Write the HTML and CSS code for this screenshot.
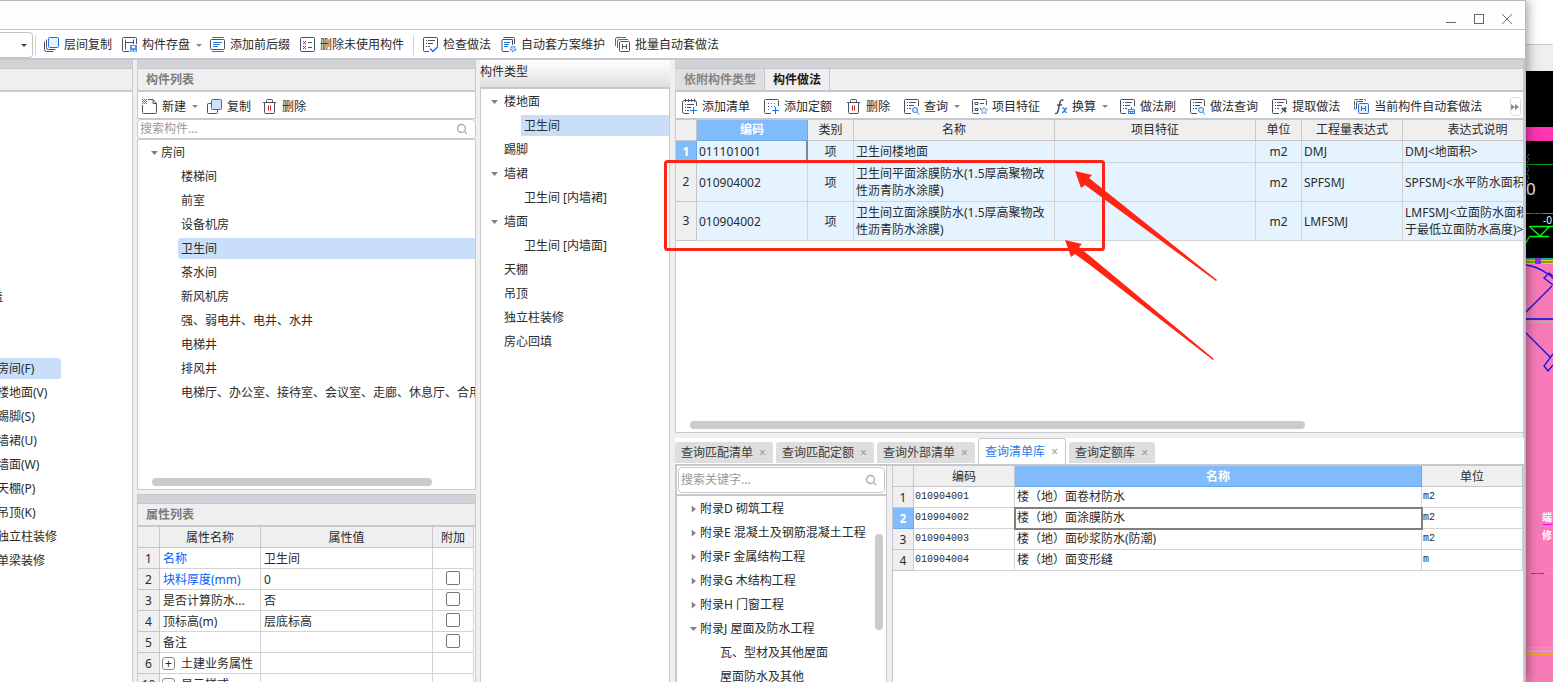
FILE: index.html
```html
<!DOCTYPE html>
<html lang="zh-CN">
<head>
<meta charset="utf-8">
<title>构件做法</title>
<link rel="stylesheet" href="styles.css">
</head>
<body>
<svg class="sprite" aria-hidden="true">
  <symbol id="i-layers" viewBox="0 0 16 16"><g fill="none" stroke="#4a4f63"><path d="M.5 4.500v8a2 2 0 0 0 2 2h7M2.500 2.500v8a2 2 0 0 0 2 2h7"/></g><rect x="4.500" y=".5" width="10" height="10" rx="1" fill="#e6f1fe" stroke="#1f74e0"/></symbol>
  <symbol id="i-save" viewBox="0 0 16 16"><path d="M14.500 7V1.500a1 1 0 0 0-1-1h-12a1 1 0 0 0-1 1v12a1 1 0 0 0 1 1H7M3.500 2.500v10M3.500 5.500h8M11.500 2.500V7" fill="none" stroke="#4a4f63"/><path d="M8 8h7v7H8z" fill="#5b95e8"/><path d="M10 9h3v2h-3zM9.500 13h1v2h-1zM12.500 13h1v2h-1z" fill="#fff"/></symbol>
  <symbol id="i-affix" viewBox="0 0 16 16"><path d="M2 .5h12M2 14.500h12M3 5.500h9M3 7.500h7M3 9.500h5" fill="none" stroke="#1f74e0"/><rect x=".5" y="2.500" width="14" height="10" rx="1" fill="none" stroke="#4a4f63"/></symbol>
  <symbol id="i-unused" viewBox="0 0 16 16"><rect x=".5" y=".5" width="14" height="14" rx="1" fill="none" stroke="#4a4f63"/><path d="M3 4l3 3M6 4L3 7M3 9l3 3M6 9l-3 3" stroke="#d8202a"/><path d="M8 5.500h4M8 10.500h4" stroke="#4a4f63"/></symbol>
  <symbol id="i-check" viewBox="0 0 16 16"><path d="M14.500 9V1.500a1 1 0 0 0-1-1h-12a1 1 0 0 0-1 1v12a1 1 0 0 0 1 1H6M3 3.500h1M5 3.500h7M3 6.500h1M5 6.500h5M3 9.500h1M5 9.500h2" fill="none" stroke="#4a4f63"/><path d="M7 11.500l3 3 5-5" fill="none" stroke="#1f74e0" stroke-width="1.500"/></symbol>
  <symbol id="i-plan" viewBox="0 0 16 16"><path d="M2.500.5h10a1 1 0 0 1 1 1V7M8 14.500H2a1 1 0 0 1-1-1v-10a1 1 0 0 1 1-1h9.500V8" fill="none" stroke="#4a4f63"/><path d="M3 5.500h6M3 7.500h5M3 9.500h4" stroke="#1f74e0"/><circle cx="12" cy="12" r="2.500" fill="#bcd6fa" stroke="#5b95e8" stroke-width="1.500" stroke-dasharray="2 1"/></symbol>
  <symbol id="i-batch" viewBox="0 0 16 16"><path d="M.5 9V2a1.500 1.500 0 0 1 1.500-1.500h9M2.500 11V4A1.500 1.500 0 0 1 4 2.500h9" fill="none" stroke="#1f74e0"/><rect x="4.500" y="4.500" width="10" height="10" rx="1" fill="#fff" stroke="#4a4f63"/><path d="M7.500 7v5M11.500 7v5M7.500 9.500h4" stroke="#4a4f63"/></symbol>
  <symbol id="i-new" viewBox="0 0 16 16"><path d="M6 .5h5l3.500 4v9a1 1 0 0 1-1 1h-12a1 1 0 0 1-1-1V6M11 .5V4.500h3.500" fill="none" stroke="#4a4f63"/><path d="M0 .5h5M0 2.500h5M0 4.500h5" stroke="#2b7de9" stroke-dasharray="1 1"/><path d="M1 1.500h4M1 3.500h4" stroke="#2b7de9" stroke-dasharray="1 1"/></symbol>
  <symbol id="i-copy" viewBox="0 0 16 16"><path d="M4 4.500H1.500a1 1 0 0 0-1 1v8a1 1 0 0 0 1 1h8a1 1 0 0 0 1-1V11" fill="none" stroke="#4a4f63"/><rect x="4.500" y=".5" width="10" height="10" rx="1" fill="#cfe2fb" stroke="#1f74e0"/></symbol>
  <symbol id="i-trash" viewBox="0 0 16 16"><path d="M1 3.500h13M4.500 3V1.500a1 1 0 0 1 1-1h4a1 1 0 0 1 1 1V3M2.500 4v9.500a1 1 0 0 0 1 1h8a1 1 0 0 0 1-1V4" fill="none" stroke="#4a4f63"/><path d="M6.500 6.500v5M8.500 6.500v5" stroke="#d8202a"/></symbol>
  <symbol id="i-addlist" viewBox="0 0 16 16"><path d="M14.500 7V3.500a2 2 0 0 0-2-2h-10a2 2 0 0 0-2 2v9a2 2 0 0 0 2 2H7M3.500 0v3M6.500 0v3M9.500 0v3M12.500 0v3M3 5.500h1M5 5.500h7M3 8.500h1M5 8.500h4M3 11.500h1M5 11.500h2" fill="none" stroke="#4a4f63"/><path d="M11.500 8v7M8 11.500h7" stroke="#1f74e0"/></symbol>
  <symbol id="i-addquota" viewBox="0 0 16 16"><path d="M14.500 7V1.500a1 1 0 0 0-1-1h-12a1 1 0 0 0-1 1v12a1 1 0 0 0 1 1H7" fill="none" stroke="#4a4f63"/><path d="M4 4.500h8M4 7.500h8M4 10.500h3" stroke="#1f74e0" stroke-dasharray="1 2"/><path d="M11.500 8v7M8 11.500h7" stroke="#1f74e0"/></symbol>
  <symbol id="i-query" viewBox="0 0 16 16"><path d="M14.500 7V1.500a1 1 0 0 0-1-1h-12a1 1 0 0 0-1 1v12a1 1 0 0 0 1 1H7M3 3.500h1M5 3.500h7M3 6.500h1M5 6.500h5M3 9.500h1M5 9.500h2" fill="none" stroke="#4a4f63"/><circle cx="11" cy="11" r="2.500" fill="#e3effd" stroke="#2b7de9"/><path d="M13 13l2 2.500" stroke="#2b7de9"/></symbol>
  <symbol id="i-feature" viewBox="0 0 16 16"><path d="M14.500 6V1.500a1 1 0 0 0-1-1h-12a1 1 0 0 0-1 1v12a1 1 0 0 0 1 1H7M3 3.500h3v2H3zM3 9.500h3v2H3zM8 4.500h4M8 9.500h1" fill="none" stroke="#4a4f63"/><path d="M12 8l1 2.200 2.500.3-1.800 1.600.5 2.600-2.200-1.300-2.200 1.300.5-2.600-1.800-1.600 2.500-.3z" fill="#e3effd" stroke="#5b95e8" stroke-width=".8"/></symbol>
  <symbol id="i-fx" viewBox="0 0 14 16"><path d="M1 14.500c2 .5 2.800-1 3.300-3.500L6 3.500C6.500 1.300 7.500.6 9.500 1.200M3 6h5" fill="none" stroke="#4a4f63" stroke-width="1.500"/><path d="M8 9c1.500-.5 2 0 2.500 2s1 2.800 2.500 2M13 9c-1.500 0-3 4.500-5 4.500" fill="none" stroke="#2b7de9" stroke-width="1.300"/></symbol>
  <symbol id="i-brush" viewBox="0 0 16 16"><path d="M14.500 7V1.500a1 1 0 0 0-1-1h-12a1 1 0 0 0-1 1v12a1 1 0 0 0 1 1H6M3 3.500h1M5 3.500h7M3 6.500h1M5 6.500h5M3 9.500h1M5 9.500h2" fill="none" stroke="#4a4f63"/><path d="M11.500 8v2.500M8.500 15v-4.500h6V15M8 12.500h7M10.500 13v2M12.500 13v2M8 14.500h7" fill="none" stroke="#2b7de9"/></symbol>
  <symbol id="i-extract" viewBox="0 0 16 16"><path d="M14.500 5V1.500a1 1 0 0 0-1-1h-12a1 1 0 0 0-1 1v12a1 1 0 0 0 1 1H7M3 3.500h1M5 3.500h7M3 6.500h1M5 6.500h5M3 9.500h1M5 9.500h2M8.500 14.500l4-4" fill="none" stroke="#4a4f63"/><path d="M10 9l4 4M11.500 11.500l2.500-3" stroke="#4a4f63" stroke-width="2.200"/></symbol>
  <symbol id="i-auto" viewBox="0 0 16 16"><path d="M2 10.500H1.500a1 1 0 0 1-1-1v-8a1 1 0 0 1 1-1h9a1 1 0 0 1 1 1V2" fill="none" stroke="#4a4f63" stroke-dasharray="4 1"/><path d="M2.500 10V3.500a1 1 0 0 1 1-1H9" fill="none" stroke="#4a4f63"/><rect x="4.500" y="4.500" width="10" height="10" rx="1" fill="#e3effd" stroke="#1f74e0"/><path d="M7.500 7v5M11.500 7v5M7.500 9.500h4" stroke="#1f74e0"/></symbol>
  <symbol id="i-search" viewBox="0 0 12 12"><circle cx="5.500" cy="5.500" r="4" fill="none" stroke="#aaa" stroke-width="1.300"/><path d="M8.500 8.500l2.500 2.500" stroke="#aaa" stroke-width="1.300"/></symbol>
</svg>

<main class="dialog">
  <header class="titlebar">
    <button class="win-btn" aria-label="最小化"><svg width="11" height="11"><path d="M0 8.500h10" stroke="#666"/></svg></button>
    <button class="win-btn" aria-label="最大化"><svg width="11" height="11"><rect x=".5" y=".5" width="9" height="9" fill="none" stroke="#666"/></svg></button>
    <button class="win-btn" aria-label="关闭"><svg width="11" height="11"><path d="M0 0l10 10M10 0L0 10" stroke="#777"/></svg></button>
  </header>

  <nav class="toolbar toolbar--main">
    <button class="combo" aria-label="选择楼层"><i class="caret"></i></button>
    <span class="sep"></span>
    <button class="tool"><svg class="icon"><use href="#i-layers"/></svg>层间复制</button>
    <button class="tool"><svg class="icon"><use href="#i-save"/></svg>构件存盘<i class="caret"></i></button>
    <button class="tool"><svg class="icon"><use href="#i-affix"/></svg>添加前后缀</button>
    <button class="tool"><svg class="icon"><use href="#i-unused"/></svg>删除未使用构件</button>
    <span class="sep"></span>
    <button class="tool"><svg class="icon"><use href="#i-check"/></svg>检查做法</button>
    <button class="tool"><svg class="icon"><use href="#i-plan"/></svg>自动套方案维护</button>
    <button class="tool"><svg class="icon"><use href="#i-batch"/></svg>批量自动套做法</button>
  </nav>

  <div class="workspace">
    <section class="col nav-col">
      <div class="strip"></div>
      <div class="panel-title"></div>
      <ul class="tree nav-tree">
        <li class="cut">盖</li>
        <li class="after-gap selected"><span>房间(F)</span></li>
        <li>楼地面(V)</li>
        <li>踢脚(S)</li>
        <li>墙裙(U)</li>
        <li>墙面(W)</li>
        <li>天棚(P)</li>
        <li>吊顶(K)</li>
        <li>独立柱装修</li>
        <li>单梁装修</li>
      </ul>
    </section>

    <section class="col list-col">
      <div class="strip"></div>
      <h2 class="panel-title">构件列表</h2>
      <div class="toolbar toolbar--list">
        <button class="tool"><svg class="icon"><use href="#i-new"/></svg>新建<i class="caret"></i></button>
        <button class="tool"><svg class="icon"><use href="#i-copy"/></svg>复制</button>
        <button class="tool"><svg class="icon"><use href="#i-trash"/></svg>删除</button>
      </div>
      <label class="search"><input type="text" placeholder="搜索构件..." aria-label="搜索构件"><svg class="search-icon"><use href="#i-search"/></svg></label>
      <div class="list-box">
        <ul class="tree room-tree">
          <li class="root"><i class="arrow arrow--down"></i>房间</li>
          <li>楼梯间</li>
          <li>前室</li>
          <li>设备机房</li>
          <li class="selected"><span>卫生间</span></li>
          <li>茶水间</li>
          <li>新风机房</li>
          <li>强、弱电井、电井、水井</li>
          <li>电梯井</li>
          <li>排风井</li>
          <li>电梯厅、办公室、接待室、会议室、走廊、休息厅、合用前室</li>
        </ul>
        <div class="hscroll"></div>
      </div>
      <div class="props">
        <div class="strip"></div>
        <h2 class="panel-title">属性列表</h2>
        <div class="props-body">
        <table class="grid props-grid">
          <colgroup><col class="w-num"><col class="w-100"><col><col class="w-add"></colgroup>
          <thead><tr><th></th><th>属性名称</th><th>属性值</th><th>附加</th></tr></thead>
          <tbody>
            <tr><th>1</th><td class="link">名称</td><td>卫生间</td><td></td></tr>
            <tr><th>2</th><td class="link">块料厚度(mm)</td><td>0</td><td class="mid"><input type="checkbox" aria-label="附加块料厚度"></td></tr>
            <tr><th>3</th><td>是否计算防水...</td><td>否</td><td class="mid"><input type="checkbox" aria-label="附加是否计算防水"></td></tr>
            <tr><th>4</th><td>顶标高(m)</td><td>层底标高</td><td class="mid"><input type="checkbox" aria-label="附加顶标高"></td></tr>
            <tr><th>5</th><td>备注</td><td></td><td class="mid"><input type="checkbox" aria-label="附加备注"></td></tr>
            <tr><th>6</th><td><button class="expand" aria-label="展开">+</button>土建业务属性</td><td></td><td></td></tr>
            <tr><th>10</th><td><button class="expand" aria-label="展开">+</button>显示样式</td><td></td><td></td></tr>
          </tbody>
        </table>
        </div>
      </div>
    </section>

    <section class="col type-col">
      <h2 class="type-title">构件类型</h2>
      <ul class="tree type-tree">
        <li><i class="arrow arrow--down"></i>楼地面</li>
        <li class="child selected"><span>卫生间</span></li>
        <li>踢脚</li>
        <li><i class="arrow arrow--down"></i>墙裙</li>
        <li class="child">卫生间 [内墙裙]</li>
        <li><i class="arrow arrow--down"></i>墙面</li>
        <li class="child">卫生间 [内墙面]</li>
        <li>天棚</li>
        <li>吊顶</li>
        <li>独立柱装修</li>
        <li>房心回填</li>
      </ul>
    </section>

    <section class="col work-col">
      <div class="strip"></div>
      <div class="tabs" role="tablist">
        <button class="tab" role="tab">依附构件类型</button>
        <button class="tab tab--on" role="tab">构件做法</button>
      </div>
      <div class="toolbar toolbar--work">
        <button class="tool"><svg class="icon"><use href="#i-addlist"/></svg>添加清单</button>
        <button class="tool"><svg class="icon"><use href="#i-addquota"/></svg>添加定额</button>
        <button class="tool"><svg class="icon"><use href="#i-trash"/></svg>删除</button>
        <button class="tool"><svg class="icon"><use href="#i-query"/></svg>查询<i class="caret"></i></button>
        <button class="tool"><svg class="icon"><use href="#i-feature"/></svg>项目特征</button>
        <button class="tool"><svg class="icon icon--fx"><use href="#i-fx"/></svg>换算<i class="caret"></i></button>
        <button class="tool"><svg class="icon"><use href="#i-brush"/></svg>做法刷</button>
        <button class="tool"><svg class="icon"><use href="#i-query"/></svg>做法查询</button>
        <button class="tool"><svg class="icon"><use href="#i-extract"/></svg>提取做法</button>
        <button class="tool"><svg class="icon"><use href="#i-auto"/></svg>当前构件自动套做法</button>
        <button class="more" aria-label="更多"><svg width="9" height="6"><path d="M0 0l4 3-4 3zM4 0l4 3-4 3z" fill="#888"/></svg></button>
      </div>
      <div class="work-box">
        <table class="grid work-grid">
          <colgroup><col class="w-num2"><col class="w-code"><col class="w-kind"><col class="w-name"><col class="w-name"><col class="w-kind"><col class="w-expr"><col class="w-desc"></colgroup>
          <thead><tr><th></th><th class="hot">编码</th><th>类别</th><th>名称</th><th>项目特征</th><th>单位</th><th>工程量表达式</th><th>表达式说明</th></tr></thead>
          <tbody>
            <tr><th class="hot">1</th><td class="cursor">011101001</td><td class="mid">项</td><td>卫生间楼地面</td><td></td><td class="mid">m2</td><td>DMJ</td><td>DMJ&lt;地面积&gt;</td></tr>
            <tr class="tall"><th>2</th><td>010904002</td><td class="mid">项</td><td>卫生间平面涂膜防水(1.5厚高聚物改性沥青防水涂膜)</td><td></td><td class="mid">m2</td><td>SPFSMJ</td><td>SPFSMJ&lt;水平防水面积&gt;</td></tr>
            <tr class="tall"><th>3</th><td>010904002</td><td class="mid">项</td><td>卫生间立面涂膜防水(1.5厚高聚物改性沥青防水涂膜)</td><td></td><td class="mid">m2</td><td>LMFSMJ</td><td>LMFSMJ&lt;立面防水面积(大<br>于最低立面防水高度)&gt;</td></tr>
          </tbody>
        </table>
        <div class="hscroll"></div>
      </div>

      <div class="qtabs" role="tablist">
        <button class="qtab" role="tab">查询匹配清单<span>×</span></button>
        <button class="qtab" role="tab">查询匹配定额<span>×</span></button>
        <button class="qtab" role="tab">查询外部清单<span>×</span></button>
        <button class="qtab qtab--on" role="tab">查询清单库<span>×</span></button>
        <button class="qtab" role="tab">查询定额库<span>×</span></button>
      </div>
      <div class="query">
        <div class="query-side">
          <label class="search search--key"><input type="text" placeholder="搜索关键字..." aria-label="搜索关键字"><svg class="search-icon"><use href="#i-search"/></svg></label>
          <div class="chapter-box">
            <ul class="tree chapter-tree">
              <li><i class="arrow"></i>附录D 砌筑工程</li>
              <li><i class="arrow"></i>附录E 混凝土及钢筋混凝土工程</li>
              <li><i class="arrow"></i>附录F 金属结构工程</li>
              <li><i class="arrow"></i>附录G 木结构工程</li>
              <li><i class="arrow"></i>附录H 门窗工程</li>
              <li><i class="arrow arrow--down"></i>附录J 屋面及防水工程</li>
              <li class="child">瓦、型材及其他屋面</li>
              <li class="child">屋面防水及其他</li>
            </ul>
            <div class="vscroll"></div>
          </div>
        </div>
        <div class="query-main">
          <table class="grid query-grid">
            <colgroup><col class="w-num2"><col class="w-100"><col><col class="w-100"></colgroup>
            <thead><tr><th></th><th>编码</th><th class="hot">名称</th><th>单位</th></tr></thead>
            <tbody>
              <tr><th>1</th><td class="mono">010904001</td><td>楼（地）面卷材防水</td><td class="mono">m2</td></tr>
              <tr><th class="hot">2</th><td class="mono">010904002</td><td class="focus">楼（地）面涂膜防水</td><td class="mono">m2</td></tr>
              <tr><th>3</th><td class="mono">010904003</td><td>楼（地）面砂浆防水(防潮)</td><td class="mono">m2</td></tr>
              <tr><th>4</th><td class="mono">010904004</td><td>楼（地）面变形缝</td><td class="mono">m</td></tr>
            </tbody>
          </table>
        </div>
      </div>

      <svg class="marks" width="560" height="210" aria-hidden="true">
        <rect x="1.500" y="1.500" width="438" height="88" rx="2" fill="none" stroke="#ff2414" stroke-width="3"/>
        <g fill="#ff2414">
          <path d="M411 11L428 15L425 18L553 120L552 121L436 36L421 25L417 28Z"/>
          <path d="M401 80L418 84L415 87L550 199L549 200L426 105L411 94L407 97Z"/>
        </g>
      </svg>
    </section>
  </div>
</main>

<aside class="drawing">
  <svg width="27" height="682">
    <rect width="27" height="682" fill="#f87bb8"/>
    <rect width="27" height="44" fill="#fff"/>
    <rect y="44" width="27" height="27" fill="#efefef"/>
    <path d="M0 44.500h27" stroke="#ccc"/>
    <rect y="71" width="27" height="187" fill="#000"/>
    <rect y="127" width="27" height="14" fill="#ff35b1"/>
    <path d="M0 164.500h27" stroke="#009a10"/>
    <path d="M3 154l-2 3 2 2-2 4M1 166l2 3-2 4 2 4-2 5 1 14" fill="none" stroke="#4d7ca8" stroke-dasharray="3 1"/>
    <path d="M0 213.500h27" stroke="#777"/>
    <path d="M5 213.500h5M12 213.500h5" stroke="#007a10"/>
    <text x="0" y="195" class="dim-big">0</text>
    <text x="17" y="224" class="dim-small">-0</text>
    <path d="M3 226.500h24M3 236.500h20M4 227l10 9 9-9M3 237l-3 6" fill="none" stroke="#00ff10" stroke-width="1.300"/>
    <rect y="258" width="27" height="2" fill="#1fa5a5"/>
    <rect y="260" width="27" height="4" fill="#d8d820"/>
    <path d="M0 262h27" stroke="#4b4b10"/>
    <rect x="9" y="258" width="6" height="6" fill="#8a2be2"/>
    <path d="M0 265c9 1 16 5 22 9s4 4 5 4M0 312l26-26M27 285l-9-7 5-5 4 3M0 333l25 25M27 354l-9 12 4 5 5-6" fill="none" stroke="#1010f0" stroke-width="1.300"/>
    <path d="M0 319h27" stroke="#3c24d0" stroke-width="2"/>
    <path d="M0 322.500h27" stroke="#b9b0b0"/>
    <text x="16" y="521" class="tag">端</text>
    <path d="M17 524.500h10" stroke="#f0f"/>
    <text x="16" y="539" class="tag">修</text>
    <path d="M0 573.500h27" stroke="#d99aae"/>
    <path d="M5 573.500h6M12 573.500h6" stroke="#ee1c2c"/>
    <path d="M0 647.500h27M0 654.500h27" stroke="#ffa51f"/>
    <path d="M0 651h27" stroke="#d9a0b8" stroke-width="3"/>
  </svg>
</aside>
</body>
</html>
```
FILE: styles.css
```css
* { box-sizing: border-box; }

body {
  margin: 0;
  height: 100vh;
  display: flex;
  overflow: hidden;
  background: #f87bb8;
  color: #2b2b2b;
  font: 12px/16px "Noto Sans", "Noto Sans CJK SC", sans-serif;
}

button, input { font: inherit; color: inherit; }
button { margin: 0; padding: 0; border: 0; background: none; white-space: nowrap; }
ul { margin: 0; padding: 0; list-style: none; }
h2 { margin: 0; font-size: 12px; }
.sprite { position: absolute; width: 0; height: 0; }

.dialog {
  flex: 1;
  min-width: 0;
  display: flex;
  flex-direction: column;
  background: #efefef;
  border-top: 1px solid #b8b8b8;
  border-right: 1px solid #b9babf;
  box-shadow: 0 0 12px rgba(0, 0, 0, .5);
  z-index: 1;
}

.titlebar {
  height: 29px;
  display: flex;
  justify-content: flex-end;
  align-items: center;
  gap: 17px;
  padding: 8px 12px 0 0;
  background: #fdfdfd;
  border-bottom: 1px solid #c4c4c4;
}
.win-btn { display: flex; }

/* toolbars */
.toolbar { display: flex; align-items: center; background: #fff; overflow: hidden; }
.toolbar--main { height: 30px; padding-top: 2px; gap: 10px; border-bottom: 2px solid #c6c7cc; }
.toolbar--list { height: 27px; gap: 11px; padding: 3px 0 0 4px; border: solid #c9c9cd; border-width: 0 1px 1px; }
.toolbar--work { height: 28px; gap: 14px; padding: 3px 2px 0 6px; border-bottom: 2px solid #c6c7cc; border-left: 1px solid #c9c9cd; }
.tool { display: flex; align-items: center; }
.icon { width: 16px; height: 16px; margin-right: 4px; flex: none; }
.icon--fx { width: 14px; }
.caret {
  width: 5px;
  margin: 0 -2px 0 6px;
  border: solid transparent;
  border-width: 3px 3px 0;
  border-top-color: #888;
}
.combo {
  width: 33px;
  height: 26px;
  display: flex;
  align-items: center;
  justify-content: flex-end;
  padding-right: 7px;
  border: 1px solid #c4c4c4;
  border-left: 0;
  border-radius: 0 4px 4px 0;
}
.combo .caret { border-top-color: #444; }
.sep { width: 1px; height: 20px; margin: 0 -1px; background: #d4d4d4; }
.toolbar--main .combo + .sep { margin: 0 -2px 0 -8px; }
.more {
  width: 11px;
  height: 19px;
  margin-left: auto;
  display: flex;
  align-items: center;
  justify-content: center;
  border: 1px solid #ddd;
  border-radius: 3px;
}

/* columns */
.workspace {
  flex: 1;
  min-height: 0;
  display: grid;
  grid-template-columns: 133px 339px 190px minmax(0, 1fr);
  grid-template-rows: minmax(0, 1fr);
  column-gap: 4px;
}
.col { display: flex; flex-direction: column; min-height: 0; min-width: 0; }
.strip { flex: none; height: 9px; background: #d2d3d9; border-bottom: 1px solid #c6c7cc; }
.panel-title {
  flex: none;
  height: 23px;
  padding: 3px 8px 0;
  background: #efefef;
  border: solid #c9c9cd;
  border-width: 0 1px 2px;
  color: #7c7c7c;
}

/* trees */
.tree li { height: 24px; display: flex; align-items: center; white-space: nowrap; }
.arrow {
  width: 7px;
  height: 7px;
  margin-right: 5px;
  flex: none;
  background: #808080;
  clip-path: polygon(25% 0, 85% 50%, 25% 100%);
}
.arrow--down { clip-path: polygon(0 20%, 100% 20%, 50% 80%); }
.selected span {
  flex: 1;
  align-self: flex-start;
  height: 21px;
  margin: 1px 0 0 -3px;
  padding: 3px 3px 2px;
  background: #c9dff9;
  border-radius: 3px 0 0 3px;
}

.nav-col { background: #fff; border-right: 1px solid #c9c9cd; overflow: hidden; }
.nav-col .panel-title { border-left: 0; border-right: 0; }
.nav-tree { padding-top: 193px; margin-left: -3px; }
.nav-tree .cut { margin-left: -6px; }
.nav-tree .after-gap { margin-top: 48px; }
.nav-tree .selected span { flex: none; width: 67px; border-radius: 3px; }

.search {
  flex: none;
  height: 20px;
  display: flex;
  align-items: center;
  padding: 0 7px 0 2px;
  background: #fff;
  border: 1px solid #c9c9cd;
  border-radius: 4px;
}
.search input { flex: 1; min-width: 0; padding: 0; border: 0; outline: 0; background: none; }
.search input::placeholder { color: #999; }
.search-icon { width: 12px; height: 12px; }

.list-box {
  flex: none;
  height: 351px;
  display: flex;
  flex-direction: column;
  justify-content: space-between;
  overflow: hidden;
  background: #fff;
  border: 1px solid #c9c9cd;
}
.room-tree { padding: 1px 0 0 43px; }
.room-tree .root { margin-left: -30px; }
.room-tree .root .arrow { margin-right: 3px; }
.hscroll { height: 8px; margin: 0 43px 3px 14px; border-radius: 4px; background: #cbcbcb; }

.props { flex: 1; min-height: 0; margin-top: 4px; display: flex; flex-direction: column; overflow: hidden; }
.props .strip { height: 10px; border: 1px solid #c6c7cc; }
.props-body { flex: 1; min-height: 0; overflow: hidden; padding-right: 1px; background: #fff; border: solid #c9c9cd; border-width: 0 1px; }

/* data grids */
.grid { border-collapse: separate; border-spacing: 0; table-layout: fixed; width: 100%; }
.grid th, .grid td {
  height: 21px;
  padding: 0 2px;
  border: solid #d3d3d3;
  border-width: 0 1px 1px 0;
  font-weight: 400;
  text-align: left;
  overflow: hidden;
}
.grid th { background: #efefef; border-color: #c6c6c9; text-align: center; }
.grid th.hot { background: #80bbfb; border-color: #68a8ef; color: #fff; font-weight: 700; }
.grid .mid { text-align: center; }
.w-num { width: 22px; }
.w-num2 { width: 21px; }
.w-100 { width: 101px; }
.w-add { width: 41px; }
.w-code { width: 111px; }
.w-kind { width: 46px; }
.w-name { width: 201px; }
.w-expr { width: 101px; }
.w-desc { width: 150px; }

.props-grid th, .props-grid td { padding-top: 1px; }
.props-grid td { padding-left: 3px; white-space: nowrap; }
.props-grid .link { color: #0a5cf5; }
.props-grid input {
  appearance: none;
  width: 14px;
  height: 14px;
  margin: 0 1px 3px 0;
  display: inline-block;
  vertical-align: middle;
  border: 1px solid #777;
  border-radius: 2px;
  background: #fff;
}
.expand {
  width: 13px;
  height: 13px;
  margin: 0 6px 0 -1px;
  border: 1px solid #888;
  border-radius: 3px;
  line-height: 10px;
}

.type-title {
  flex: none;
  height: 29px;
  padding-top: 4px;
  font-weight: 400;
  background: linear-gradient(#fff, #dfdfdf);
  border-bottom: 2px solid #c9c9cd;
}
.type-tree { flex: 1; padding: 1px 0 0 10px; background: #fff; border: solid #c9c9cd; border-width: 0 1px; }
.type-tree li { padding-left: 13px; }
.type-tree li:has(.arrow) { padding-left: 0; }
.type-tree .arrow { margin-right: 6px; }
.type-tree .child { padding-left: 33px; }
.type-tree .selected span { border-radius: 0; }

/* right side */
.work-col { position: relative; margin-left: 1px; border-right: 2px solid #c6c7cc; }
.tabs { height: 23px; display: flex; border-bottom: 2px solid #c6c7cc; }
.tab { padding: 0 8px 0 9px; border-right: 1px solid #c6c7cc; background: #dfdfdf; color: #858585; font-weight: 700; }
.tab--on { padding: 0 8px; background: #efefef; color: #1a1a1a; }

.work-box {
  flex: none;
  height: 313px;
  display: flex;
  flex-direction: column;
  justify-content: space-between;
  overflow: hidden;
  background: #fff;
  border: solid #c9c9cd;
  border-width: 0 0 1px 1px;
}
.work-box .hscroll { margin: 0 218px 3px 14px; }
.work-grid { width: 877px; flex: none; }
.work-grid td { background: #e5f3ff; line-height: 17px; }
.work-grid tbody th, .work-grid tbody td { height: 22px; }
.work-grid .tall th, .work-grid .tall td { height: 39px; }
.grid .cursor { border-right: 2px solid #858585; }

.qtabs {
  flex: none;
  height: 28px;
  margin: 5px -1px 0 0;
  display: flex;
  align-items: flex-end;
  gap: 3px;
  background: #fff;
  border-bottom: 2px solid #c6c7cc;
}
.qtab {
  height: 21px;
  margin-bottom: 1px;
  padding: 0 7px 0 6px;
  display: flex;
  align-items: center;
  background: #dedede;
  color: #3c3c3c;
  border-radius: 3px 3px 0 0;
}
.qtab span { width: 7px; margin-left: 6px; color: #999; text-align: center; }
.qtab--on { height: 26px; margin-bottom: 0; background: #fff; border: 1px solid #c6c7cc; border-bottom: 0; color: #1f7cea; }

.query { flex: 1; min-height: 0; display: grid; grid-template-columns: 212px minmax(0, 1fr); column-gap: 5px; }
.query-side { display: flex; flex-direction: column; min-height: 0; background: #fff; border: solid #c9c9cd; border-width: 0 1px 0 2px; }
.search--key { height: 26px; margin: 1px; padding-right: 7px; }
.chapter-box { flex: 1; min-height: 0; display: flex; justify-content: space-between; overflow: hidden; border-top: 2px solid #c9c9cd; }
.chapter-tree { padding: 1px 0 0 13px; }
.chapter-tree .arrow { margin-right: 3px; }
.chapter-tree .child { padding-left: 30px; }
.vscroll { width: 8px; height: 96px; margin: 38px 3px 0 0; flex: none; border-radius: 4px; background: #cbcbcb; }

.query-main { background: #fff; border-left: 1px solid #c6c7cc; overflow: hidden; }
.query-grid th { padding-top: 2px; }
.query-grid td { padding: 0 1px; white-space: nowrap; }
.query-grid td:nth-child(3) { padding-left: 2px; }
.query-grid .mono { font-family: "Liberation Mono", monospace; font-size: 10px; }
.query-grid .focus { outline: 2px solid #808080; outline-offset: -1px; }

.marks { position: absolute; left: -11px; top: 100px; pointer-events: none; }

.drawing { flex: none; width: 27px; overflow: hidden; background: #f87bb8; }
.drawing svg { display: block; }
.dim-big { font: 17px "Noto Sans", sans-serif; fill: #eee; }
.dim-small { font: 10px "Noto Sans", sans-serif; fill: #eee; }
.tag { font: 700 10px "Noto Sans CJK SC", sans-serif; fill: #fff; }
```
